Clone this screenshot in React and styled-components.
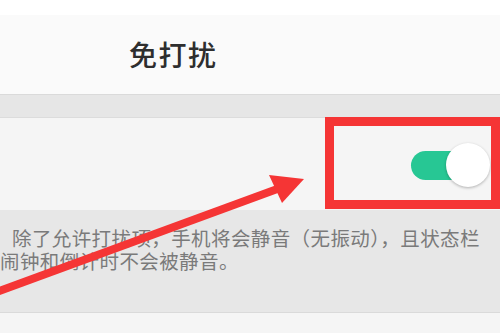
import styled, { createGlobalStyle } from 'styled-components';

const Global = createGlobalStyle`
  html, body {
    margin: 0;
    padding: 0;
    background: #f5f5f5;
  }
  * { box-sizing: border-box; }
`

const Page = styled.div`
  position: relative;
  width: 500px;
  height: 333px;
  overflow: hidden;
  font-family: "Noto Sans CJK SC", "Noto Sans", sans-serif;
  background: #f5f5f5;
`

const StatusBar = styled.div`
  height: 15px;
  background: #ffffff;
`

const Header = styled.div`
  height: 79px;
  background: #fafafa;
  display: flex;
  align-items: center;
  padding-left: 129px;
  padding-bottom: 2px;
`

const Title = styled.h1`
  margin: 0;
  font-size: 28px;
  font-weight: 500;
  color: #2e2e2e;
  letter-spacing: 1.5px;
`

const Band = styled.div`
  height: 24px;
  background: #e6e6e6;
  border-top: 1px solid #dadada;
  border-bottom: 1px solid #dcdcdc;
`

const Row = styled.div`
  height: 92px;
  background: #f5f5f5;
  display: flex;
  justify-content: flex-end;
  align-items: center;
  padding-right: 10px;
  padding-top: 2px;
`

const Switch = styled.div`
  position: relative;
  width: 79px;
  height: 44px;
  display: flex;
  align-items: center;
`

const Track = styled.div`
  width: 60px;
  height: 29px;
  border-radius: 15px;
  background: ${p => (p.on ? '#27c794' : '#cccccc')};
`

const Knob = styled.div`
  position: absolute;
  right: 0;
  top: 0;
  width: 44px;
  height: 44px;
  border-radius: 50%;
  background: #ffffff;
  box-shadow: 0 1px 3px rgba(0, 0, 0, 0.28);
`

const Description = styled.div`
  height: 103px;
  background: #e7e7e7;
  border-bottom: 1px solid #dadada;
  padding-top: 16px;
  font-size: 19.5px;
  line-height: 23px;
  letter-spacing: 0.4px;
  color: #7a7a7a;
  white-space: nowrap;
`

const Line = styled.div`
  padding-left: ${p => p.indent || 0}px;
`

const Highlight = styled.div`
  position: absolute;
  left: 325px;
  top: 117px;
  width: 175px;
  height: 92px;
  border: 9px solid #f53535;
`

const Arrow = styled.svg`
  position: absolute;
  left: 0;
  top: 0;
  pointer-events: none;
`

export default function App() {
  return (
    <Page>
      <Global />
      <StatusBar />
      <Header>
        <Title>免打扰</Title>
      </Header>
      <Band />
      <Row>
        <Switch>
          <Track on />
          <Knob />
        </Switch>
      </Row>
      <Description>
        <Line indent={12}>除了允许打扰项，手机将会静音（无振动），且状态栏</Line>
        <Line>闹钟和倒计时不会被静音。</Line>
      </Description>

      <Highlight />
      <Arrow width="500" height="333" viewBox="0 0 500 333">
        <line x1="-6" y1="293" x2="280" y2="188" stroke="#f53535" strokeWidth="8" />
        <polygon points="304,179 269,175 282,203" fill="#f53535" />
      </Arrow>
    </Page>
  )
}
